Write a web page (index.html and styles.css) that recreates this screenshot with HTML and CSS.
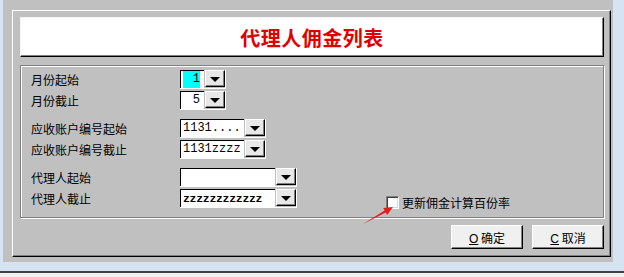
FILE: index.html
```html
<!DOCTYPE html>
<html lang="zh-CN">
<head>
  <meta charset="UTF-8">
  <title>代理人佣金列表</title>
  <link rel="stylesheet" href="styles.css">
</head>
<body>
<div class="desktop">
  <div class="outer">
    <div class="window">
      <div class="title-box">代理人佣金列表</div>

      <div class="group">
        <div class="section">
          <div class="row">
            <span class="label">月份起始</span>
            <div class="combo">
              <div class="field small"><span class="selected">1</span></div>
              <div class="drop"><span class="arrow"></span></div>
            </div>
          </div>
          <div class="row">
            <span class="label">月份截止</span>
            <div class="combo">
              <div class="field small">5</div>
              <div class="drop"><span class="arrow"></span></div>
            </div>
          </div>
        </div>

        <div class="section">
          <div class="row">
            <span class="label">应收账户编号起始</span>
            <div class="combo">
              <div class="field medium">1131....</div>
              <div class="drop"><span class="arrow"></span></div>
            </div>
          </div>
          <div class="row">
            <span class="label">应收账户编号截止</span>
            <div class="combo">
              <div class="field medium">1131zzzz</div>
              <div class="drop"><span class="arrow"></span></div>
            </div>
          </div>
        </div>

        <div class="section">
          <div class="row">
            <span class="label">代理人起始</span>
            <div class="combo">
              <div class="field wide"></div>
              <div class="drop"><span class="arrow"></span></div>
            </div>
          </div>
          <div class="row">
            <span class="label">代理人截止</span>
            <div class="combo">
              <div class="field wide zs">zzzzzzzzzzzz</div>
              <div class="drop"><span class="arrow"></span></div>
            </div>
            <label class="check">
              <span class="box"></span>
              <span>更新佣金计算百份率</span>
            </label>
          </div>
        </div>
      </div>

      <div class="buttons">
        <button class="btn"><u>O</u> 确定</button>
        <button class="btn"><u>C</u> 取消</button>
      </div>
    </div>
  </div>
</div>
<div class="bottom-line"></div>

<!-- red pointer drawn over the dialog -->
<svg class="pointer" width="624" height="277" viewBox="0 0 624 277">
  <polygon points="363,224 385.8,212.4 387.1,214.9 393,207 383.2,207.9 384.6,210.4" fill="#e41e1e"/>
</svg>
</body>
</html>
```

FILE: styles.css
```css
body{
  margin: 0;
  padding: 0;
  width: 624px;
  height: 277px;
  background: #f0f0f0;
  font-family: "Noto Sans CJK SC", "Noto Sans", sans-serif;
  font-size: 12px;
  color: #000;
  position: relative;
  overflow: hidden;
}

.desktop{
  background: #d6e3f3;
  padding: 0 11px 0 3px;
  height: 271px;
}

.outer{
  background: #c0c0c0;
  height: 262px;
  box-sizing: border-box;
  padding: 10px 2px 0 9px;
}

.window{
  box-sizing: border-box;
  height: 247px;
  border-left: 1px solid #fff;
  border-top: 1px solid #fff;
  border-right: 1px solid #000;
  border-bottom: 1px solid #000;
  box-shadow: inset -1px -1px 0 #808080;
  padding: 6px 6px 0 7px;
}

.title-box{
  height: 40px;
  box-sizing: border-box;
  background: #fff;
  border-top: 1px solid #f4f4f4;
  border-left: 1px solid #f4f4f4;
  border-right: 1px solid #000;
  border-bottom: 1px solid #000;
  box-shadow: inset -1px -1px 0 #808080;
  display: flex;
  justify-content: center;
  align-items: center;
  color: #e00000;
  font-size: 20px;
  font-weight: bold;
  letter-spacing: 0.5px;
}

.group{
  margin-top: 8px;
  height: 153px;
  box-sizing: border-box;
  border: 1px solid #808080;
  box-shadow: inset 1px 1px 0 #fff, 1px 1px 0 #fff;
  padding: 3px 0 0 10px;
  display: flex;
  flex-direction: column;
  gap: 7px;
}

.section{
  display: flex;
  flex-direction: column;
}

.row{
  display: flex;
  align-items: center;
  height: 21px;
}

.label{
  width: 149px;
}

.combo{
  display: flex;
  align-items: flex-start;
  gap: 1px;
  height: 18px;
  border-right: 1px solid #fff;
  border-bottom: 1px solid #fff;
}

.field{
  box-sizing: border-box;
  height: 18px;
  background: #fff;
  border-left: 1px solid #000;
  border-top: 1px solid #000;
  font-family: "Liberation Mono", monospace;
  font-size: 12px;
  line-height: 17px;
  padding-left: 2px;
  white-space: nowrap;
  overflow: hidden;
}

.field.small{
  width: 24px;
  text-align: right;
  padding: 0 4px 0 0;
}

.selected{
  display: inline-block;
  background: #00ffff;
  width: 17px;
  text-align: right;
  padding-right: 0;
}

.field.medium{
  width: 64px;
}

.field.wide{
  width: 95px;
}

.field.zs{
  font-size: 11.5px;
  font-weight: bold;
  letter-spacing: -0.3px;
}

.drop{
  box-sizing: border-box;
  width: 20px;
  height: 17px;
  background: #e8e8e8;
  border-top: 1px solid #fff;
  border-left: 1px solid #fff;
  border-right: 1px solid #000;
  border-bottom: 1px solid #000;
  box-shadow: inset -1px -1px 0 #808080;
  display: flex;
  justify-content: center;
  align-items: center;
}

.arrow{
  width: 0;
  height: 0;
  border-left: 5px solid transparent;
  border-right: 5px solid transparent;
  border-top: 5px solid #000;
  margin-top: 1px;
}

.check{
  display: flex;
  align-items: center;
  gap: 3px;
  margin-left: 89px;
  margin-top: 7px;
}

.box{
  box-sizing: border-box;
  width: 13px;
  height: 13px;
  background: #fff;
  border-top: 1px solid #808080;
  border-left: 1px solid #808080;
  border-right: 1px solid #fff;
  border-bottom: 1px solid #fff;
  box-shadow: inset 1px 1px 0 #404040, inset -1px -1px 0 #dcdcdc;
}

.buttons{
  display: flex;
  justify-content: flex-end;
  gap: 9px;
  margin-top: 7px;
}

.btn{
  box-sizing: border-box;
  width: 72px;
  height: 24px;
  padding: 0;
  background: #f0f0f0;
  border-top: 1px solid #fff;
  border-left: 1px solid #fff;
  border-right: 1px solid #000;
  border-bottom: 1px solid #000;
  box-shadow: inset -1px -1px 0 #808080;
  font-family: "Noto Sans CJK SC", "Noto Sans", sans-serif;
  font-size: 12px;
  color: #000;
}

.btn u{
  font-family: "Liberation Sans", sans-serif;
}

.bottom-line{
  height: 2px;
  background: #404040;
}

.pointer{
  position: absolute;
  left: 0;
  top: 0;
  pointer-events: none;
}
```
